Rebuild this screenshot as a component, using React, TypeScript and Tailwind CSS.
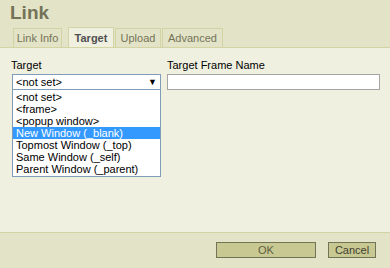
import { useState } from 'react';

const options = [
    '<not set>',
    '<frame>',
    '<popup window>',
    'New Window (_blank)',
    'Topmost Window (_top)',
    'Same Window (_self)',
    'Parent Window (_parent)',
];

const tabs = [
    { label: 'Link Info', w: 'w-[49px]' },
    { label: 'Target', w: 'w-[46px]' },
    { label: 'Upload', w: 'w-[46px]' },
    { label: 'Advanced', w: 'w-[61px]' },
];

export default function App() {
    const [active] = useState('Target');
    const [hover] = useState(3);

    return (
        <div className="w-[390px] h-[268px] flex flex-col bg-[#e3e3c7] font-['Liberation_Sans',Arial,sans-serif] overflow-hidden">
            {/* Title */}
            <div className="h-[27px] pl-[10px] pt-[2px] text-[19px] leading-[22px] font-bold text-[#737357]">Link</div>

            {/* Tabs */}
            <div className="h-[20px] flex items-end pl-[13px]">
                {tabs.map((t) =>
                    t.label === active ? (
                        <div
                            key={t.label}
                            className={`${t.w} ml-[5px] mr-px h-[21px] -mb-px border border-b-0 border-[#d3d3a3] bg-[#f0f0e1] text-center text-[11px] leading-[20px] font-bold text-[#4f4f4f]`}
                        >
                            {t.label}
                        </div>
                    ) : (
                        <div
                            key={t.label}
                            className={`${t.w} mr-px h-[19px] border border-b-0 border-[#d3d3a3] bg-[#e3e3c7] text-center text-[11px] leading-[18px] text-[#737357]`}
                        >
                            {t.label}
                        </div>
                    ),
                )}
            </div>

            {/* Body */}
            <div className="flex-1 bg-[#f0f0e1] border-t border-b border-[#d3d3a3] pl-[11px] pr-[10px] pt-[10px]">
                <div className="flex gap-[6px]">
                    <div className="w-[150px] flex flex-col">
                        <div className="text-[11px] leading-[14px] text-black">Target</div>
                        <div className="relative mt-[2px] ml-px">
                            <div className="h-[16px] border border-[#7f9db9] bg-white flex items-center pl-[3px] pr-[3px] text-[11px] leading-[14px] text-black">
                                <span className="flex-1">&lt;not set&gt;</span>
                                <span className="text-[9px] leading-[10px]">▼</span>
                            </div>
                            <div className="absolute left-0 top-[15px] w-[149px] border border-[#7f9db9] bg-white py-px">
                                {options.map((o, i) => (
                                    <div
                                        key={o}
                                        className={
                                            i === hover
                                                ? 'h-[12px] pl-[3px] text-[11px] leading-[12px] bg-[#3399ff] text-white'
                                                : 'h-[12px] pl-[3px] text-[11px] leading-[12px] text-black'
                                        }
                                    >
                                        {o}
                                    </div>
                                ))}
                            </div>
                        </div>
                    </div>
                    <div className="flex-1 flex flex-col">
                        <div className="text-[11px] leading-[14px] text-black">Target Frame Name</div>
                        <div className="mt-[2px] h-[16px] border border-[#a5a5a5] bg-white" />
                    </div>
                </div>
            </div>

            {/* Footer */}
            <div className="h-[35px] flex items-start justify-end gap-[12px] pt-[9px] pr-[14px]">
                <button className="w-[100px] h-[16px] border border-[#737357] bg-[#c8c893] text-[11px] leading-[14px] text-[#5f5f3f]">
                    OK
                </button>
                <button className="w-[48px] h-[16px] border border-[#737357] bg-[#c8c893] text-[11px] leading-[14px] text-[#3f3f2f]">
                    Cancel
                </button>
            </div>
        </div>
    );
}
